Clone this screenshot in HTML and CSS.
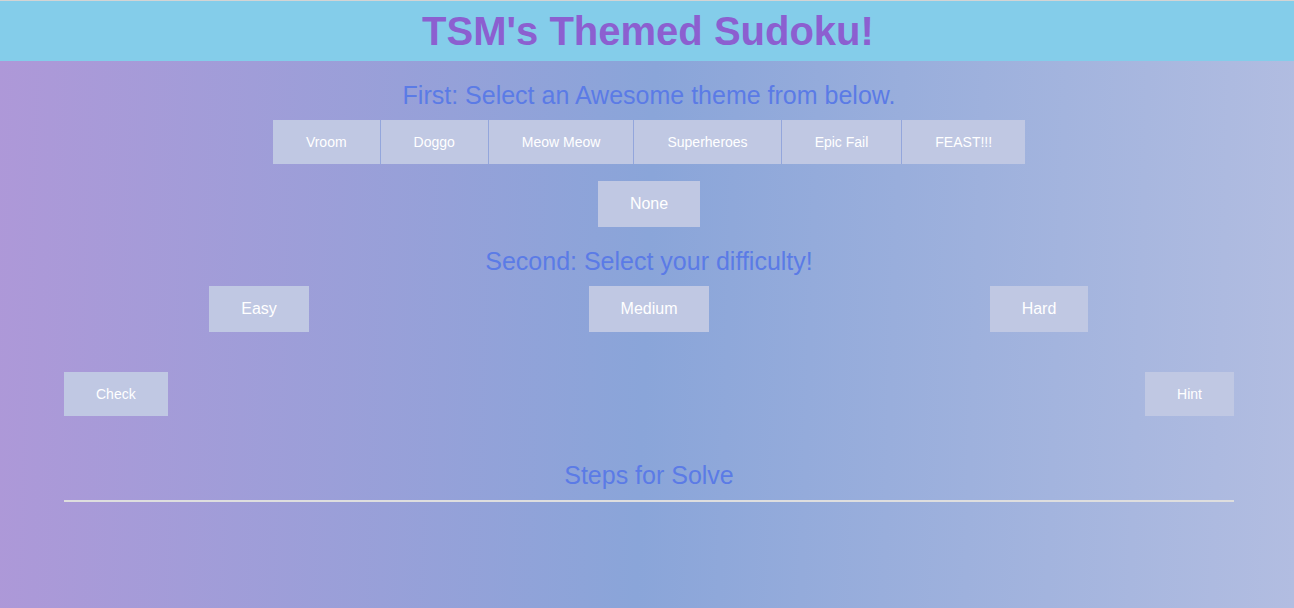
FILE: index.html
```html
<!DOCTYPE html>
<html>
<head>
<meta charset="utf-8">
<title>TSM's Themed Sudoku!</title>
<link rel="stylesheet" href="styles.css">
</head>
<body>
<header class="header">
  <h1 class="title">TSM's Themed Sudoku!</h1>
</header>
<main class="main">
  <h2 class="heading heading-first">First: Select an Awesome theme from below.</h2>
  <div class="themes">
    <button class="btn theme">Vroom</button>
    <button class="btn theme">Doggo</button>
    <button class="btn theme">Meow Meow</button>
    <button class="btn theme">Superheroes</button>
    <button class="btn theme">Epic Fail</button>
    <button class="btn theme">FEAST!!!</button>
  </div>
  <div class="none-row">
    <button class="btn big">None</button>
  </div>
  <h2 class="heading heading-second">Second: Select your difficulty!</h2>
  <div class="difficulty">
    <div class="cell"><button class="btn big">Easy</button></div>
    <div class="cell"><button class="btn big">Medium</button></div>
    <div class="cell"><button class="btn big">Hard</button></div>
  </div>
  <div class="actions">
    <button class="btn small">Check</button>
    <button class="btn small">Hint</button>
  </div>
  <h2 class="heading heading-steps">Steps for Solve</h2>
  <hr class="rule">
</main>
</body>
</html>
```

FILE: styles.css
```css
html, body {
  margin: 0;
  padding: 0;
}
body {
  min-height: 100vh;
  font-family: "Liberation Sans", Arial, sans-serif;
  background: linear-gradient(92deg, #ae98d8 0%, #8aa5d9 50%, #b2bde1 100%);
  background-attachment: fixed;
}
.header {
  border-top: 1px solid #d4d4d4;
  background: #84cdea;
  height: 60px;
  display: flex;
  justify-content: center;
  align-items: center;
  padding-left: 2px;
}
.title {
  margin: 0;
  font-size: 40px;
  line-height: 60px;
  font-weight: bold;
  color: #8c5fd0;
}
.main {
  margin: 0 60px 0 64px;
  display: flex;
  flex-direction: column;
}
.heading {
  margin: 0;
  font-size: 25px;
  line-height: 28px;
  font-weight: normal;
  color: #5b7be6;
  text-align: center;
}
.heading-first { margin-top: 20px; }
.heading-second { margin-top: 20px; }
.heading-steps { margin-top: 45px; }
.btn {
  font-family: "Liberation Sans", Arial, sans-serif;
  background: #c0c8e3;
  color: #ffffff;
  border: none;
  margin: 0;
  cursor: pointer;
}
.themes {
  margin-top: 11px;
  display: flex;
  justify-content: center;
}
.theme {
  font-size: 14px;
  line-height: 16px;
  padding: 14px 33px;
  border-left: 1px solid #93a6dc;
}
.theme:first-child {
  border-left: none;
}
.none-row {
  margin-top: 17px;
  display: flex;
  justify-content: center;
}
.big {
  font-size: 16px;
  line-height: 18px;
  padding: 14px 32px;
}
.small {
  font-size: 14px;
  line-height: 16px;
  padding: 14px 32px;
}
.difficulty {
  margin-top: 11px;
  display: grid;
  grid-template-columns: repeat(3, 1fr);
}
.cell {
  display: flex;
  justify-content: center;
}
.actions {
  margin-top: 40px;
  display: flex;
  justify-content: space-between;
}
.rule {
  margin: 11px 0 0 0;
  border: none;
  height: 2px;
  background: #dedede;
}
```
